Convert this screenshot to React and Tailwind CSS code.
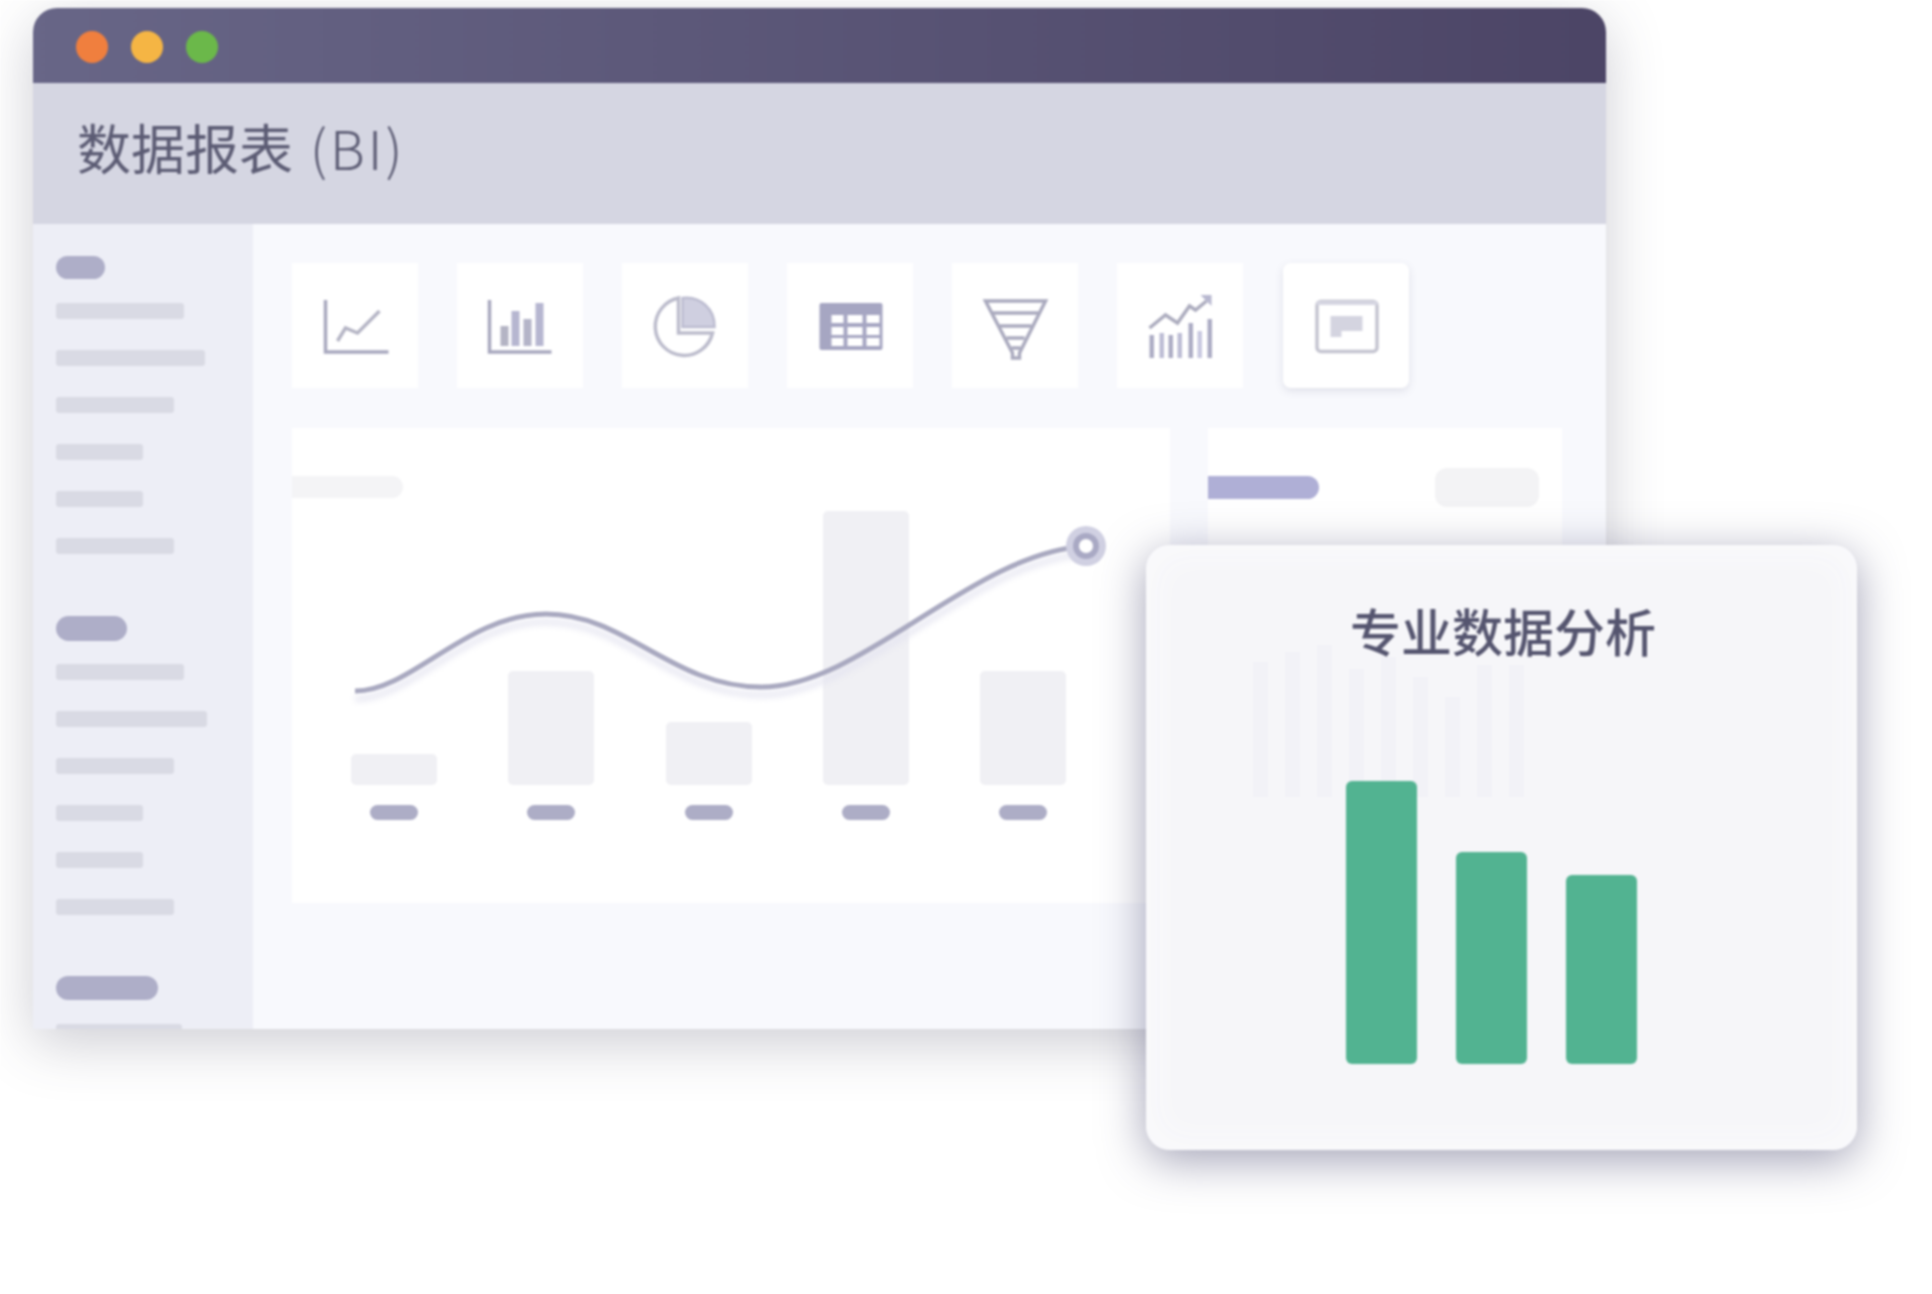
import React from "react";

const cjk = "font-['Noto_Sans_CJK_SC','Noto_Sans',sans-serif]";

function SidebarGroup({ pill, pillH, lines, tight }) {
  return (
    <div className="flex flex-col items-start">
      <div className="rounded-full bg-[#aeaec8]" style={{ width: pill, height: pillH }} />
      <div className={`flex flex-col gap-[31px] ${tight ? "mt-[23px]" : "mt-[24px]"}`}>
        {lines.map((w, i) => (
          <div key={i} className="h-[16px] rounded-[3px] bg-[#d9dae4]" style={{ width: w }} />
        ))}
      </div>
    </div>
  );
}

const IconLine = () => (
  <svg viewBox="0 0 125 125" className="h-full w-full" fill="none">
    <path d="M33 37V89H96" stroke="#a8a8be" strokeWidth="3.5" />
    <path d="M45 78L53 65L65 70L87 48" stroke="#b4b4c4" strokeWidth="3.5" />
  </svg>
);
const IconBars = () => (
  <svg viewBox="0 0 125 125" className="h-full w-full" fill="none">
    <path d="M32 37V89H94" stroke="#a8a8be" strokeWidth="3.5" />
    <rect x="43" y="63" width="8" height="20" fill="#b4b4c4" />
    <rect x="54" y="48" width="8" height="35" fill="#b6b6d0" />
    <rect x="66" y="56" width="8" height="27" fill="#b4b4c8" />
    <rect x="78" y="40" width="8" height="43" fill="#b6b6d0" />
  </svg>
);
const IconPie = () => (
  <svg viewBox="0 0 125 125" className="h-full w-full" fill="none">
    <path d="M56 35A29 29 0 1 0 90 70H56Z" stroke="#bcbccc" strokeWidth="3.5" />
    <path d="M60 35A28 28 0 0 1 92 64H60Z" fill="#cfcfe0" stroke="#bcbcd0" strokeWidth="2.5" />
  </svg>
);
const IconTable = () => (
  <svg viewBox="0 0 125 125" className="h-full w-full">
    <rect x="32" y="40" width="63" height="47" rx="2" fill="#a6a6c2" />
    {[52, 64, 75].map((y) =>
      [
        [44, 12],
        [60, 15],
        [79, 13],
      ].map(([x, w]) => <rect key={`${x}-${y}`} x={x} y={y} width={w} height="8" fill="#ffffff" />)
    )}
  </svg>
);
const IconFunnel = () => (
  <svg viewBox="0 0 125 125" className="h-full w-full" fill="none" stroke="#aaaabe" strokeWidth="3.5">
    <path d="M33 38H93L67 90V95H60V90Z" />
    <path d="M40 50H86M47 63H79M54 75H72M59 85H68" />
  </svg>
);
const IconTrend = () => (
  <svg viewBox="0 0 125 125" className="h-full w-full" fill="none">
    <path d="M32 65L48 52L60 60L72 43L78 47L89 38" stroke="#acacbe" strokeWidth="3.5" />
    <path d="M83 32H94V43Z" fill="#b8b8d0" />
    {[
      [32, 72, "#acacc4"],
      [42, 70, "#bcbcd4"],
      [51, 72, "#acacc4"],
      [60, 70, "#bcbcd4"],
      [71, 60, "#acacc4"],
      [80, 68, "#c8c8e0"],
      [90, 56, "#acacc4"],
    ].map(([x, y, c]) => (
      <rect key={x} x={x} y={y} width="4.5" height={95 - y} fill={c} />
    ))}
  </svg>
);
const IconBoard = () => (
  <svg viewBox="0 0 125 125" className="h-full w-full" fill="none">
    <rect x="33.5" y="38.5" width="60" height="50" rx="4" stroke="#c4c4d0" strokeWidth="3.5" />
    <path d="M33 40H94" stroke="#d6d6e2" strokeWidth="4" />
    <path d="M47 53H79V68H58V74H47Z" fill="#d4d4e0" />
  </svg>
);

const stripes = [135, 145, 152, 128, 140, 120, 100, 132, 132];

export default function App() {
  const s1 = [128, 149, 118, 87, 87, 118];
  const s2 = [128, 151, 118, 87, 87, 118];
  const bars = [31, 114, 63, 275, 114];
  return (
    <div className={`relative h-[1294px] w-[1932px] overflow-hidden bg-white pl-[33px] pt-[8px] ${cjk} blur-[0.8px]`}>
      {/* application window */}
      <div className="flex h-[1021px] w-[1573px] flex-col overflow-hidden rounded-t-[24px] bg-[#f8f9fd] shadow-[0_14px_55px_rgba(60,60,85,0.26)]">
        <div className="flex h-[75px] shrink-0 items-center gap-[23px] bg-gradient-to-r from-[#686687] to-[#4c4566] pl-[43px] pt-[2px]">
          <div className="h-[32px] w-[32px] rounded-full bg-[#f07f3e]" />
          <div className="h-[32px] w-[32px] rounded-full bg-[#f5b544]" />
          <div className="h-[32px] w-[32px] rounded-full bg-[#6bb84a]" />
        </div>
        <div className="flex h-[141px] shrink-0 items-center bg-[#d5d6e2] pb-[13px] pl-[44px]">
          <span className="text-[54px] leading-none font-normal text-[#5c5c74]">
            数据报表 <span className="ml-[5px] font-light tracking-[3px]">(BI)</span>
          </span>
        </div>
        <div className="flex min-h-0 flex-1">
          <aside className="flex w-[220px] shrink-0 flex-col gap-[62px] bg-[#edeef6] pl-[23px] pt-[32px]">
            <SidebarGroup pill={49} pillH={23} lines={s1} />
            <SidebarGroup pill={71} pillH={25} lines={s2} tight />
            <div className="-mt-[1px]">
              <SidebarGroup pill={102} pillH={24} lines={[126]} />
            </div>
          </aside>
          <main className="flex flex-1 flex-col gap-[40px] pl-[39px] pt-[39px]">
            <div className="flex gap-[39.1px]">
              {[IconLine, IconBars, IconPie, IconTable, IconFunnel, IconTrend].map((I, i) => (
                <div key={i} className="h-[125px] w-[126px] bg-white">
                  <I />
                </div>
              ))}
              <div className="h-[125px] w-[126px] rounded-[8px] bg-white shadow-[0_3px_8px_rgba(90,90,120,0.15)]">
                <IconBoard />
              </div>
            </div>
            <div className="flex gap-[38px]">
              <section className="relative h-[475px] w-[878px] bg-white pt-[48px]">
                <div className="h-[22px] w-[111px] rounded-r-full bg-[#f4f4f6]" />
                <div className="mt-[13px] flex gap-[71.3px] pl-[59px]">
                  {bars.map((h, i) => (
                    <div key={i} className="flex h-[309px] w-[86px] flex-col items-center justify-end">
                      <div className="w-[86px] rounded-[5px] bg-[#f0f0f4]" style={{ height: h }} />
                      <div className="mt-[20px] h-[15px] w-[48px] rounded-full bg-[#adadc6]" />
                    </div>
                  ))}
                </div>
                <svg className="absolute left-0 top-0 h-[475px] w-[878px]" viewBox="0 0 878 475" fill="none">
                  <path
                    d="M63 271C120 271 174 194 254 194C334 194 380 267 469 267C570 267 680 133 794 126"
                    stroke="#e4e4f0"
                    strokeWidth="5"
                    className="blur-[3px]"
                  />
                  <path
                    d="M63 263C120 263 174 186 254 186C334 186 380 259 469 259C570 259 680 125 794 118"
                    stroke="#a9a9c0"
                    strokeWidth="5"
                  />
                  <circle cx="794" cy="118" r="20" fill="#d0d0e2" />
                  <circle cx="794" cy="118" r="13" fill="#a9a9c4" />
                  <circle cx="794" cy="118" r="7" fill="#ffffff" />
                </svg>
              </section>
              <section className="flex h-[475px] w-[354px] items-start justify-between bg-white pr-[23px] pt-[40px]">
                <div className="mt-[8px] h-[23px] w-[111px] rounded-r-full bg-[#afafd6]" />
                <div className="h-[39px] w-[104px] rounded-[12px] bg-[#f3f3f5]" />
              </section>
            </div>
          </main>
        </div>
      </div>

      {/* floating card */}
      <div className="absolute left-[1146px] top-[545px] flex h-[605px] w-[711px] flex-col items-center rounded-[24px] bg-[#f6f6f9] pt-[50px] shadow-[0_10px_45px_rgba(70,70,110,0.5),inset_0_0_40px_#fcfcfd]">
        <div className="ml-[3px] text-[51px] leading-[70px] font-medium text-[#55556f]">专业数据分析</div>
        <div className="absolute left-[107px] top-[100px] flex h-[152px] items-end gap-[17px]">
          {stripes.map((h, i) => (
            <div key={i} className="w-[15px] bg-[#f2f2f7]" style={{ height: h }} />
          ))}
        </div>
        <div className="absolute left-[200px] top-[236px] flex h-[283px] items-end gap-[39px]">
          <div className="h-[283px] w-[71px] rounded-[6px] bg-[#52b391]" />
          <div className="h-[212px] w-[71px] rounded-[6px] bg-[#52b391]" />
          <div className="h-[189px] w-[71px] rounded-[6px] bg-[#52b391]" />
        </div>
      </div>
    </div>
  );
}
